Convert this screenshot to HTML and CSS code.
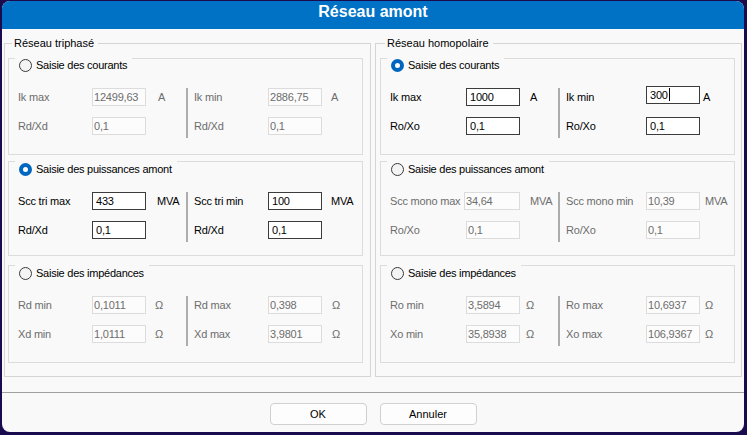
FILE: index.html
```html
<!DOCTYPE html>
<html lang="fr">
<head>
<meta charset="utf-8">
<title>Réseau amont</title>
<link rel="stylesheet" href="styles.css">
</head>
<body>
<div class="window">
  <div class="titlebar">Réseau amont</div>
  <div class="content">
    <div class="panel panel-left">
      <div class="legend">Réseau triphasé</div>

      <div class="grp grp-cur">
        <div class="hd"><span class="radio"></span><span>Saisie des courants</span></div>
        <div class="rows rows-left">
          <span class="lbl dis">Ik max</span><span class="fld dis">12499,63</span><span class="unit dis p12">A</span>
          <span class="vdiv"></span>
          <span class="lbl2 dis">Ik min</span><span class="fld dis">2886,75</span><span class="unit dis p9">A</span>
          <span class="lbl dis">Rd/Xd</span><span class="fld dis">0,1</span><span></span>
          <span class="lbl2 dis">Rd/Xd</span><span class="fld dis">0,1</span><span></span>
        </div>
      </div>

      <div class="grp grp-pow">
        <div class="hd"><span class="radio on"></span><span>Saisie des puissances amont</span></div>
        <div class="rows rows-left">
          <span class="lbl">Scc tri max</span><span class="fld on">433</span><span class="unit p11">MVA</span>
          <span class="vdiv"></span>
          <span class="lbl2">Scc tri min</span><span class="fld on">100</span><span class="unit p9">MVA</span>
          <span class="lbl">Rd/Xd</span><span class="fld on">0,1</span><span></span>
          <span class="lbl2">Rd/Xd</span><span class="fld on">0,1</span><span></span>
        </div>
      </div>

      <div class="grp grp-imp">
        <div class="hd"><span class="radio"></span><span>Saisie des impédances</span></div>
        <div class="rows rows-left">
          <span class="lbl dis">Rd min</span><span class="fld dis">0,1011</span><span class="unit dis p9">Ω</span>
          <span class="vdiv"></span>
          <span class="lbl2 dis">Rd max</span><span class="fld dis">0,398</span><span class="unit dis p10">Ω</span>
          <span class="lbl dis">Xd min</span><span class="fld dis">1,0111</span><span class="unit dis p9">Ω</span>
          <span class="lbl2 dis">Xd max</span><span class="fld dis">3,9801</span><span class="unit dis p10">Ω</span>
        </div>
      </div>
    </div>

    <div class="panel panel-right">
      <div class="legend">Réseau homopolaire</div>

      <div class="grp grp-cur">
        <div class="hd"><span class="radio on"></span><span>Saisie des courants</span></div>
        <div class="rows rows-right">
          <span class="lbl">Ik max</span><span class="fld on">1000</span><span class="unit p10">A</span>
          <span class="vdiv"></span>
          <span class="lbl2">Ik min</span><span class="fld on raised">300<span class="caret"></span></span><span class="unit p3">A</span>
          <span class="lbl">Ro/Xo</span><span class="fld on">0,1</span><span></span>
          <span class="lbl2">Ro/Xo</span><span class="fld on">0,1</span><span></span>
        </div>
      </div>

      <div class="grp grp-pow">
        <div class="hd"><span class="radio"></span><span>Saisie des puissances amont</span></div>
        <div class="rows rows-right">
          <span class="lbl dis">Scc mono max</span><span class="fld dis wide">34,64</span><span class="unit dis p10">MVA</span>
          <span class="vdiv"></span>
          <span class="lbl2 dis">Scc mono min</span><span class="fld dis">10,39</span><span class="unit dis p5">MVA</span>
          <span class="lbl dis">Ro/Xo</span><span class="fld dis">0,1</span><span></span>
          <span class="lbl2 dis">Ro/Xo</span><span class="fld dis">0,1</span><span></span>
        </div>
      </div>

      <div class="grp grp-imp">
        <div class="hd"><span class="radio"></span><span>Saisie des impédances</span></div>
        <div class="rows rows-right">
          <span class="lbl dis">Ro min</span><span class="fld dis">3,5894</span><span class="unit dis p6">Ω</span>
          <span class="vdiv"></span>
          <span class="lbl2 dis">Ro max</span><span class="fld dis">10,6937</span><span class="unit dis p5">Ω</span>
          <span class="lbl dis">Xo min</span><span class="fld dis">35,8938</span><span class="unit dis p6">Ω</span>
          <span class="lbl2 dis">Xo max</span><span class="fld dis">106,9367</span><span class="unit dis p5">Ω</span>
        </div>
      </div>
    </div>
  </div>
  <div class="footer">
    <button class="btn" type="button">OK</button>
    <button class="btn" type="button">Annuler</button>
  </div>
</div>
</body>
</html>
```

FILE: styles.css
```css
html, body {
  margin: 0;
  padding: 0;
  background: #1a0b4e;
}

body {
  width: 747px;
  height: 435px;
  overflow: hidden;
  font-family: "Liberation Sans", Arial, sans-serif;
  font-size: 11px;
  color: #000;
}

.window {
  width: 742px;
  height: 431px;
  margin: 1px 3px 3px 2px;
  background: #f9f9f9;
  border-radius: 8px;
  overflow: hidden;
  display: flex;
  flex-direction: column;
}

.titlebar {
  height: 28px;
  box-sizing: border-box;
  background: #0072c6;
  color: #fff;
  font-weight: bold;
  font-size: 16px;
  line-height: 22px;
  text-align: center;
  padding-bottom: 6px;
}

.content {
  display: flex;
  gap: 4px;
  padding: 14px 2px 0 2px;
}

.panel {
  width: 367px;
  height: 334px;
  box-sizing: border-box;
  border: 1px solid #d5d5d5;
  display: flex;
  flex-direction: column;
  align-items: flex-start;
  padding-left: 3px;
}

.panel-right {
  padding-left: 4px;
}

.legend {
  height: 13px;
  line-height: 13px;
  margin: -7px 0 0 4px;
  padding: 0 4px 0 2px;
  background: #f9f9f9;
}

.panel-right .legend {
  margin-left: 5px;
}

.grp {
  width: 355px;
  box-sizing: border-box;
  border: 1px solid #dcdcdc;
}

.grp-cur {
  height: 97px;
  margin-top: 8px;
}

.grp-pow {
  height: 95px;
  margin-top: 6px;
}

.grp-imp {
  height: 98px;
  margin-top: 9px;
}

.hd {
  display: inline-flex;
  align-items: center;
  gap: 4px;
  height: 16px;
  margin: -1px 0 0 6px;
  padding: 0 5px 0 4px;
  background: #f9f9f9;
  letter-spacing: -0.25px;
}

.grp-cur .hd {
  height: 14px;
}

.radio {
  width: 13px;
  height: 13px;
  box-sizing: border-box;
  border-radius: 50%;
  border: 1px solid #3a3a3a;
  background: #f4f4f4;
  flex: none;
}

.radio.on {
  border: 4px solid #0067c0;
  background: #fff;
}

.rows {
  display: grid;
  grid-template-rows: 18px 18px;
  row-gap: 11px;
  align-items: center;
  margin-left: 9px;
  letter-spacing: -0.2px;
}

.grp-cur .rows {
  margin-top: 14px;
}

.grp-pow .rows,
.grp-imp .rows {
  margin-top: 14px;
}

.rows-left {
  grid-template-columns: 74px 54px 40px 2px 80px 54px auto;
}

.rows-right {
  grid-template-columns: 76px 54px 38px 2px 86px 54px auto;
}

.lbl, .lbl2, .unit {
  white-space: nowrap;
}

.lbl2 {
  padding-left: 6px;
}

.dis {
  color: #6d6d6d;
}

.fld {
  height: 18px;
  box-sizing: border-box;
  display: flex;
  align-items: center;
  white-space: nowrap;
}

.fld.dis {
  border: 1px solid #dcdcdc;
  background: #fcfcfc;
  padding-left: 1px;
}

.fld.on {
  border: 1px solid #3c3c3c;
  background: #fff;
  padding-left: 3px;
}

.fld.wide {
  width: 56px;
  margin-left: -2px;
}

.fld.raised {
  align-self: start;
  margin-top: -2px;
}

.caret {
  display: inline-block;
  width: 1px;
  height: 13px;
  background: #000;
  margin-left: 1px;
}

.vdiv {
  grid-column: 4;
  grid-row: 1 / 3;
  align-self: stretch;
  background: #acacac;
  margin: 0 0 -3px 0;
}

.p3 { padding-left: 3px; }
.p5 { padding-left: 5px; }
.p6 { padding-left: 6px; }
.p9 { padding-left: 9px; }
.p10 { padding-left: 10px; }
.p11 { padding-left: 11px; }
.p12 { padding-left: 12px; }

.footer {
  margin-top: 15px;
  border-top: 1px solid #a0a0a0;
  padding: 10px 0 7px 0;
  display: flex;
  justify-content: center;
  gap: 13px;
}

.btn {
  width: 97px;
  height: 22px;
  box-sizing: border-box;
  border: 1px solid #d0d0d0;
  border-radius: 4px;
  background: #fdfdfd;
  font-family: "Liberation Sans", Arial, sans-serif;
  font-size: 11px;
  color: #000;
  padding: 0;
}
```
